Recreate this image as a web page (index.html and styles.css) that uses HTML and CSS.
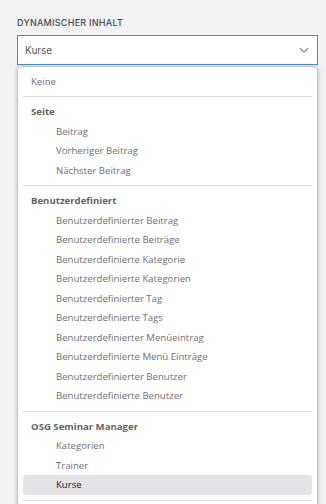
FILE: index.html
```html
<!DOCTYPE html>
<html>
<head>
<meta charset="UTF-8">
<title>Dynamischer Inhalt</title>
<link rel="stylesheet" href="styles.css">
</head>
<body>

<div class="field">
	<div class="fieldLabel">Dynamischer Inhalt</div>

	<div class="selectBox">
		<span class="selectValue">Kurse</span>
		<svg class="chevron" width="10" height="7" viewBox="0 0 10 7">
			<path d="M1 1.2 L5 5.2 L9 1.2" fill="none" stroke="#8c8c8c" stroke-width="1.3"/>
		</svg>
	</div>

	<div class="menu">
		<div class="opt">Keine</div>
		<div class="sep"></div>

		<div class="opt group">Seite</div>
		<div class="opt sub">Beitrag</div>
		<div class="opt sub">Vorheriger Beitrag</div>
		<div class="opt sub">Nächster Beitrag</div>
		<div class="sep"></div>

		<div class="opt group">Benutzerdefiniert</div>
		<div class="opt sub">Benutzerdefinierter Beitrag</div>
		<div class="opt sub">Benutzerdefinierte Beiträge</div>
		<div class="opt sub">Benutzerdefinierte Kategorie</div>
		<div class="opt sub">Benutzerdefinierte Kategorien</div>
		<div class="opt sub">Benutzerdefinierter Tag</div>
		<div class="opt sub">Benutzerdefinierte Tags</div>
		<div class="opt sub">Benutzerdefinierter Menüeintrag</div>
		<div class="opt sub">Benutzerdefinierte Menü Einträge</div>
		<div class="opt sub">Benutzerdefinierter Benutzer</div>
		<div class="opt sub">Benutzerdefinierte Benutzer</div>
		<div class="sep"></div>

		<div class="opt group">OSG Seminar Manager</div>
		<div class="opt sub">Kategorien</div>
		<div class="opt sub">Trainer</div>
		<div class="opt sub selected">Kurse</div>
		<div class="sep"></div>
	</div>
</div>

</body>
</html>
```

FILE: styles.css
```css
body {
  margin: 0;
  background-color: #f2f2f2;
  font-family: "Open Sans", Arial, sans-serif;
  overflow: hidden;
}

.field {
  padding: 18px 0 0 17px;
  width: 301px;
}

.fieldLabel {
  font-family: Inter, "Open Sans", sans-serif;
  font-size: 9px;
  font-weight: 500;
  text-transform: uppercase;
  letter-spacing: 0.25px;
  color: #4a4a4a;
  line-height: 10px;
  margin-bottom: 7px;
}

.selectBox {
  height: 28px;
  border: 1px solid #3d8ee6;
  background-color: #fff;
  display: flex;
  align-items: center;
  justify-content: space-between;
  padding: 0 8px 0 7px;
}

.selectValue {
  font-family: Inter, "Open Sans", sans-serif;
  font-size: 10px;
  color: #5a5a5a;
}

.chevron {
  display: block;
}

.menu {
  margin-top: 1px;
  background-color: #fff;
  border: 1px solid #c6c6c6;
  border-radius: 4px;
  box-shadow: 0 1px 4px rgba(0, 0, 0, 0.22);
  padding: 4.5px 5px;
}

.opt {
  height: 19.5px;
  line-height: 19.5px;
  padding-left: 8px;
  font-size: 9.6px;
  color: #707070;
  white-space: nowrap;
}

.group {
  font-weight: 700;
  color: #636363;
}

.sub {
  padding-left: 33px;
}

.selected {
  background-color: #e3e3e8;
  border-radius: 3px;
  color: #222;
}

.sep {
  height: 1px;
  background-color: #dedede;
  margin: 5px 0;
}
```
